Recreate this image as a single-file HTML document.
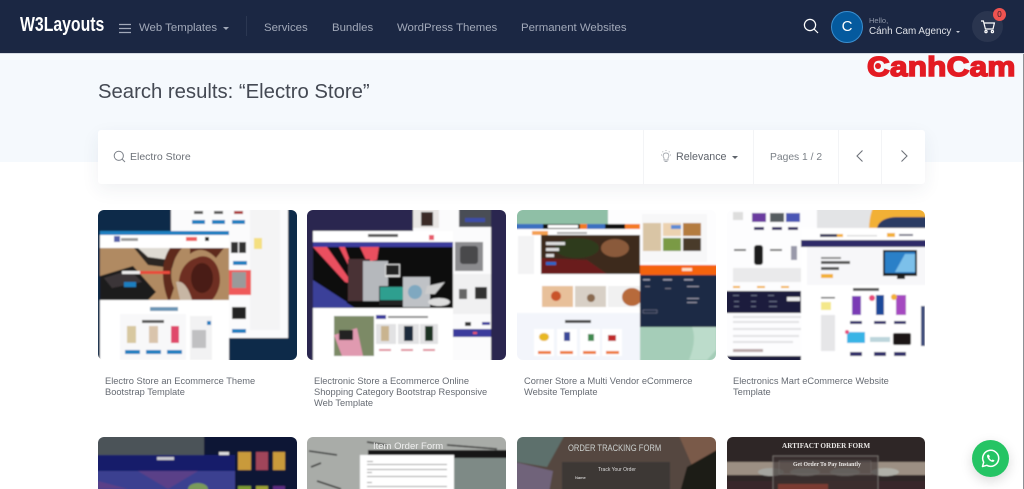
<!DOCTYPE html>
<html><head><meta charset="utf-8">
<style>
*{box-sizing:border-box}
html,body{margin:0;padding:0;width:1024px;height:489px;overflow:hidden;background:#fff;font-family:"Liberation Sans","Noto Sans CJK SC",sans-serif}
body{position:relative}
.a{position:absolute;white-space:nowrap}
#hd{position:absolute;left:0;top:0;width:1024px;height:53px;background:#1b2743}
.nav{position:absolute;top:21px;font-size:11.4px;line-height:14px;color:#a2a9b9;white-space:nowrap}
.card{position:absolute;width:199px;border-radius:6px;overflow:hidden}
.card svg{display:block;position:absolute;left:0;top:0}
.t{position:absolute;top:375.500px;font-size:9.300px;line-height:11.200px;color:#666b73;width:195px}
.caret{position:absolute;width:0;height:0;border-left:3px solid transparent;border-right:3px solid transparent;border-top:3px solid currentColor}
</style></head><body>
<div id="hd"></div>
<div class="a" style="left:20px;top:13px;font-size:20px;line-height:24px;font-weight:700;color:#fff;transform-origin:0 0;transform:scaleX(.79)">W3Layouts</div>
<svg class="a" style="left:119px;top:23px" width="13" height="11"><path d="M0 1.500H12M0 5.500H12M0 9.500H12" stroke="#a2a9b9" stroke-width="1.200"/></svg>
<div class="nav" style="left:139px">Web Templates</div>
<div class="caret" style="left:223px;top:27px;color:#a2a9b9"></div>
<div class="a" style="left:246px;top:16px;width:1px;height:20px;background:#2b3752"></div>
<div class="nav" style="left:264px">Services</div>
<div class="nav" style="left:332px">Bundles</div>
<div class="nav" style="left:397px">WordPress Themes</div>
<div class="nav" style="left:521px">Permanent Websites</div>
<svg class="a" style="left:803px;top:18px" width="16" height="16" fill="none" stroke="#fff" stroke-width="1.200"><circle cx="7" cy="7" r="5.600"/><path d="M11 11L15 15"/></svg>
<div class="a" style="left:831px;top:11px;width:32px;height:32px;border-radius:50%;background:#055a9e;border:1px solid #3b8fd0;color:#fff;font-size:15px;line-height:30px;text-align:center">C</div>
<div class="a" style="left:869px;top:16px;font-size:7.500px;line-height:10px;color:#8f97a9">Hello,</div>
<div class="a" style="left:869px;top:25.500px;font-size:9.900px;line-height:12px;color:#dfe2e8">Cánh Cam Agency</div>
<div class="caret" style="left:956px;top:31px;color:#c8ccd5;border-left-width:2.500px;border-right-width:2.500px;border-top-width:2.500px"></div>
<div class="a" style="left:972px;top:11px;width:31px;height:31px;border-radius:50%;background:#2a354f"></div>
<svg class="a" style="left:980px;top:19px" width="16" height="15" fill="none" stroke="#fff" stroke-width="1.200"><path d="M1 2H3.400L5.400 10H13L14.400 4H4"/><circle cx="6" cy="12.600" r="1.100"/><circle cx="12.400" cy="12.600" r="1.100"/></svg>
<div class="a" style="left:993px;top:8px;width:13px;height:13px;border-radius:50%;background:#ef5350;color:#2a1d2a;font-size:8px;line-height:13px;text-align:center">0</div>

<div class="a" style="left:0;top:53px;width:1024px;height:1px;background:#d5dae3"></div>
<div class="a" style="left:0;top:54px;width:1024px;height:108px;background:#f5f9fd"></div>
<div class="a" style="left:1023px;top:54px;width:1px;height:435px;background:#8d8f94"></div>
<div class="a" style="left:867px;top:51px;font-size:28px;line-height:32px;font-weight:700;color:#e31b23;-webkit-text-stroke:1.500px #e31b23;letter-spacing:.2px;transform-origin:0 0;transform:scaleX(1.125)">CanhCam</div>
<div class="a" style="left:875px;top:63px;width:6px;height:6px;border-radius:50%;background:#e31b23"></div>
<div class="a" style="left:98px;top:80px;font-size:20.300px;line-height:25px;color:#444953">Search results: “Electro Store”</div>

<div class="a" style="left:98px;top:130px;width:827px;height:54px;background:#fff;border-radius:3px;box-shadow:0 6px 18px rgba(40,60,90,.07)"></div>
<svg class="a" style="left:113px;top:150px" width="13" height="13" fill="none" stroke="#7c8189" stroke-width="1"><circle cx="5.800" cy="5.800" r="4.600"/><path d="M9 9L12 12"/></svg>
<div class="a" style="left:130px;top:151px;font-size:10.500px;line-height:13px;color:#6c7178">Electro Store</div>
<div class="a" style="left:643px;top:130px;width:1px;height:54px;background:#f3f4f6"></div>
<div class="a" style="left:753px;top:130px;width:1px;height:54px;background:#f3f4f6"></div>
<div class="a" style="left:838px;top:130px;width:1px;height:54px;background:#f3f4f6"></div>
<div class="a" style="left:881px;top:130px;width:1px;height:54px;background:#f3f4f6"></div>
<svg class="a" style="left:660px;top:150px" width="12" height="13" fill="none" stroke="#a9adb3" stroke-width=".9"><path d="M4 8C2.500 6 3 3 6 3S9.500 6 8 8V10H4ZM4.500 11.500H7.500M1 5H2M10 5H11M2.500 1.500L3.200 2.200M9.500 1.500L8.800 2.200M6 0V1"/></svg>
<div class="a" style="left:676px;top:151px;font-size:10.700px;line-height:13px;color:#5e636b">Relevance</div>
<div class="caret" style="left:732px;top:156px;color:#5e636b"></div>
<div class="a" style="left:770px;top:151px;font-size:10.300px;line-height:13px;color:#7b8087">Pages 1 / 2</div>
<svg class="a" style="left:855px;top:149px" width="10" height="14" fill="none" stroke="#6f747b" stroke-width="1.100"><path d="M7.500 1.500L2 7L7.500 12.500"/></svg>
<svg class="a" style="left:899px;top:149px" width="10" height="14" fill="none" stroke="#6f747b" stroke-width="1.100"><path d="M2.500 1.500L8 7L2.500 12.500"/></svg>

<!-- Card 1 -->
<div class="card" style="left:98px;top:210px;height:150px">
<svg width="199" height="150" viewBox="0 0 199 150"><defs><filter id="b" x="-5%" y="-5%" width="110%" height="110%"><feGaussianBlur stdDeviation=".75"/></filter></defs>
<g filter="url(#b)">
<rect x="-6" y="-6" width="211" height="162" fill="#0a2b49"/>
<rect x="73" y="-6" width="117" height="134" fill="#fbfbfc"/>
<rect x="152" y="-6" width="30" height="126" fill="#f4f4f5"/>
<rect x="94" y="10" width="13" height="4" fill="#1b7fc0"/><rect x="114" y="10" width="13" height="4" fill="#1b7fc0"/><rect x="134" y="10" width="13" height="4" fill="#1b7fc0"/>
<rect x="96" y="1" width="9" height="3" fill="#555"/><rect x="116" y="1" width="9" height="3" fill="#555"/><rect x="136" y="1" width="9" height="3" fill="#a33"/>
<rect x="133" y="32" width="7" height="11" fill="#333"/><rect x="141" y="32" width="7" height="11" fill="#333"/><rect x="135" y="51" width="14" height="4" fill="#1b7fc0"/>
<rect x="131" y="60" width="22" height="25" fill="#ef5a5a"/><rect x="134" y="62" width="14" height="16" fill="#9a9a9a"/>
<rect x="134" y="97" width="14" height="12" fill="#222"/><rect x="134" y="119" width="14" height="4" fill="#1b7fc0"/>
<rect x="156" y="28" width="8" height="11" fill="#f4df80"/>
<rect x="2" y="21" width="129" height="135" fill="#fff"/>
<rect x="2" y="21" width="129" height="4" fill="#1b7fc0"/>
<rect x="16" y="26" width="6" height="6" fill="#5560aa"/><rect x="23" y="28" width="17" height="3" fill="#999"/>
<rect x="88" y="27" width="11" height="4" fill="#ef5a5a"/><rect x="107" y="27" width="4" height="4" fill="#222"/>
<rect x="2" y="38" width="129" height="52" fill="#b08a62"/>
<path d="M36 38H80L74 58L50 55Z" fill="#2a2523"/>
<path d="M40 38H76L72 50L50 47Z" fill="#dedad2"/>
<path d="M2 66L35 56L58 82L50 90H2Z" fill="#1e1a1a"/>
<path d="M6 68L32 60L44 72L14 78Z" fill="#3a3638"/>
<path d="M72 38L84 38C74 50 70 64 76 78L72 90H70C62 68 64 50 72 38Z" fill="#5e2a1e"/>
<path d="M84 90C76 70 84 52 98 48C110 42 122 52 122 70C122 78 118 86 114 90Z" fill="#6e2e20"/>
<ellipse cx="104" cy="68" rx="11" ry="15" fill="#4a1d16"/>
<path d="M78 72C84 70 90 76 94 90H82Z" fill="#c7b6a4"/>
<path d="M92 38H126L118 48C108 38 100 38 92 44Z" fill="#5e2a1e"/>
<rect x="24" y="61" width="18" height="3" fill="#eee"/><rect x="42" y="61" width="30" height="3" fill="#e84a3a"/>
<rect x="26" y="72" width="12" height="5" fill="#1b7fc0"/>
<rect x="52" y="97" width="28" height="4" fill="#6b95b5"/>
<rect x="22" y="104" width="66" height="46" fill="#f8f8f9"/>
<rect x="44" y="110" width="22" height="3" fill="#555"/>
<rect x="29" y="116" width="9" height="17" fill="#d8c8a0"/><rect x="51" y="116" width="9" height="17" fill="#d9c4ac"/><rect x="73" y="116" width="8" height="17" fill="#e0486a"/>
<rect x="27" y="140" width="15" height="4" fill="#1b7fc0"/><rect x="48" y="140" width="15" height="4" fill="#1b7fc0"/><rect x="69" y="140" width="15" height="4" fill="#1b7fc0"/>
<rect x="92" y="106" width="22" height="44" fill="#f2f2f3"/><rect x="109" y="111" width="4" height="4" fill="#1b7fc0"/>
<rect x="94" y="120" width="14" height="18" fill="#c0c0c2"/>
</g></svg></div>

<!-- Card 2 -->
<div class="card" style="left:307px;top:210px;height:150px">
<svg width="199" height="150" viewBox="0 0 199 150"><g filter="url(#b)">
<rect x="-6" y="-6" width="211" height="162" fill="#2b2650"/>
<rect x="106" y="-6" width="78" height="162" fill="#fbfbfc"/>
<rect x="106" y="-6" width="26" height="24" fill="#e9e6e4"/><rect x="114" y="2" width="12" height="14" fill="#3a2a28"/>
<rect x="152" y="-6" width="32" height="23" fill="#4a4d55"/><rect x="158" y="8" width="20" height="4" fill="#3c4da8"/>
<rect x="148" y="32" width="28" height="29" fill="#8b8b8e"/><rect x="153" y="36" width="18" height="18" fill="#4a4a4c" rx="3"/>
<rect x="146" y="64" width="38" height="40" fill="#f0f0f1"/><rect x="168" y="77" width="12" height="12" fill="#333"/><rect x="152" y="79" width="8" height="10" fill="#666"/>
<rect x="146" y="119" width="38" height="8" fill="#3a3a9c"/><rect x="166" y="122" width="4" height="2" fill="#e85a6a"/>
<rect x="175" y="112" width="8" height="3" fill="#3a3a9c"/><rect x="158" y="112" width="6" height="4" fill="#333"/>
<rect x="6" y="21" width="140" height="135" fill="#fff"/>
<rect x="6" y="32" width="140" height="5" fill="#3a3a9c"/>
<rect x="61" y="24" width="30" height="3" fill="#555"/>
<rect x="122" y="25" width="5" height="5" fill="#e85a6a"/>
<rect x="6" y="37" width="140" height="61" fill="#0a0a0d"/>
<path d="M6 70L40 92L36 98H6Z" fill="#3a3f99"/><path d="M6 72L48 98H6Z" fill="#3a3f99"/>
<path d="M6 37H38L52 76L38 72Z" fill="#ea4f5f"/><path d="M20 37H32L55 82L46 74Z" fill="#0a0a0d"/>
<path d="M53 37H72L70 50L60 52Z" fill="#ea4f5f"/>
<rect x="41" y="49" width="22" height="42" fill="#4a3136"/>
<rect x="56" y="51" width="25" height="40" fill="#b5b8bc"/>
<rect x="78" y="54" width="15" height="13" fill="#ddd"/><rect x="79" y="55" width="13" height="10" fill="#222"/>
<rect x="72" y="76" width="27" height="19" fill="#222"/><rect x="73" y="77" width="25" height="13" fill="#2d9f8f"/>
<rect x="96" y="67" width="27" height="30" fill="#bfc2c6"/><circle cx="108" cy="82" r="7" fill="#7fa8c0"/>
<path d="M120 76L138 72L128 84L118 84Z" fill="#ccc"/><ellipse cx="132" cy="92" rx="11" ry="4" fill="#ddd"/>
<rect x="27" y="106" width="40" height="40" fill="#7c8a66"/><path d="M27 125L50 118L56 146H35Z" fill="#e09ab0"/><rect x="32" y="120" width="14" height="10" fill="#222"/>
<rect x="69" y="105" width="10" height="4" fill="#3a3a9c"/><rect x="81" y="106" width="40" height="2" fill="#888"/>
<rect x="69" y="114" width="20" height="20" fill="#e2e2e3"/><rect x="74" y="116" width="8" height="15" fill="#c9b48f"/>
<rect x="91" y="114" width="21" height="20" fill="#e2e2e3"/><rect x="97" y="116" width="9" height="15" fill="#1a2a3a"/>
<rect x="113" y="114" width="18" height="20" fill="#e2e2e3"/><rect x="118" y="116" width="8" height="15" fill="#1f3020"/>
<rect x="72" y="139" width="12" height="2" fill="#e08a9a"/><rect x="94" y="139" width="12" height="2" fill="#e08a9a"/><rect x="116" y="139" width="12" height="2" fill="#e08a9a"/>
</g></svg></div>

<!-- Card 3 -->
<div class="card" style="left:517px;top:210px;height:150px">
<svg width="199" height="150" viewBox="0 0 199 150"><g filter="url(#b)">
<rect x="-6" y="-6" width="211" height="162" fill="#fdfdfe"/>
<rect x="-6" y="-6" width="97" height="26" fill="#8fbfa6"/>
<rect x="123" y="117" width="82" height="39" fill="#a5cdb8"/>
<path d="M175 117H199V140L190 150H172Q180 130 175 117Z" fill="#bcdccb"/>
<rect x="125" y="4" width="65" height="48" fill="#f7f7f8"/>
<rect x="126" y="13" width="18" height="28" fill="#d9c5a5"/><rect x="146" y="13" width="18" height="13" fill="#ecd2b0"/><rect x="166" y="13" width="18" height="13" fill="#b47b3f"/>
<rect x="146" y="28" width="18" height="13" fill="#7a9a45"/><rect x="166" y="28" width="18" height="13" fill="#4a3a2a"/>
<rect x="154" y="15" width="10" height="4" fill="#5d8bd5"/>
<rect x="-6" y="14" width="129" height="142" fill="#fff"/>
<rect x="-6" y="14" width="32" height="5" fill="#3a70c0"/><rect x="26" y="14" width="37" height="5" fill="#111"/><rect x="31" y="15" width="30" height="3" fill="#fff"/><rect x="63" y="14" width="7" height="5" fill="#f47a20"/><rect x="70" y="14" width="18" height="5" fill="#3a70c0"/><rect x="88" y="14" width="22" height="5" fill="#111"/><rect x="108" y="14" width="15" height="5" fill="#f47a20"/>
<rect x="15" y="21" width="16" height="4" fill="#f4a050"/><rect x="40" y="22" width="30" height="2" fill="#aaa"/>
<rect x="24" y="25" width="99" height="39" fill="#3c2a1c"/>
<path d="M24 48L70 50L90 64H24Z" fill="#6a1f1f"/><ellipse cx="98" cy="38" rx="14" ry="9" fill="#8a5a3a"/><ellipse cx="60" cy="38" rx="22" ry="10" fill="#2e3a1c"/>
<rect x="29" y="32" width="19" height="3" fill="#ddd"/><rect x="29" y="38" width="13" height="3" fill="#ddd"/><rect x="29" y="44" width="8" height="3" fill="#ddd"/><rect x="29" y="52" width="10" height="3" fill="#2a68c8"/>
<rect x="1" y="26" width="16" height="38" fill="#f3f3f4"/>
<rect x="25" y="76" width="31" height="21" fill="#e8c09a"/><circle cx="39" cy="86" r="5" fill="#c9522a"/>
<rect x="58" y="76" width="31" height="21" fill="#d8d0c6"/><circle cx="74" cy="88" r="4" fill="#8a6a50"/>
<rect x="91" y="76" width="32" height="21" fill="#f1f1f1"/><ellipse cx="115" cy="87" rx="10" ry="9" fill="#b76a3a"/>
<rect x="-6" y="103" width="129" height="53" fill="#f3f5fb"/>
<rect x="48" y="110" width="26" height="3" fill="#444"/>
<rect x="17" y="119" width="20" height="27" fill="#fff"/><rect x="40" y="119" width="20" height="27" fill="#fff"/><rect x="63" y="119" width="20" height="27" fill="#fff"/><rect x="85" y="119" width="20" height="27" fill="#fff"/>
<ellipse cx="27" cy="127" rx="5" ry="4" fill="#e8b820"/><rect x="47" y="122" width="6" height="9" fill="#3a4a9a"/><rect x="71" y="124" width="6" height="7" fill="#3f8a50"/><rect x="91" y="125" width="8" height="6" fill="#c02a2a"/>
<rect x="21" y="141" width="13" height="3" fill="#ee7a3a"/><rect x="43" y="141" width="13" height="3" fill="#ee7a3a"/><rect x="66" y="141" width="13" height="3" fill="#ee7a3a"/><rect x="89" y="141" width="13" height="3" fill="#ee7a3a"/>
<rect x="123" y="55" width="82" height="62" fill="#1d2a45"/>
<rect x="123" y="55" width="82" height="10" fill="#f4630f"/>
<rect x="165" y="58" width="10" height="3" fill="#fde0c8"/>
<rect x="126" y="69" width="7" height="1.500" fill="#99a"/><rect x="146" y="69" width="9" height="1.500" fill="#99a"/><rect x="167" y="69" width="9" height="1.500" fill="#99a"/>
<rect x="128" y="76" width="5" height="1" fill="#778"/><rect x="148" y="78" width="6" height="1" fill="#778"/><rect x="170" y="76" width="12" height="1" fill="#99a"/><rect x="170" y="88" width="12" height="1" fill="#99a"/><rect x="170" y="92" width="10" height="1" fill="#99a"/>
<rect x="126" y="100" width="14" height="3" fill="none" stroke="#889" stroke-width=".5"/>
</g></svg></div>

<!-- Card 4 -->
<div class="card" style="left:727px;top:210px;height:150px;width:198px">
<svg width="199" height="150" viewBox="0 0 199 150"><g filter="url(#b)">
<rect x="-6" y="-6" width="211" height="162" fill="#fdfdfe"/>
<rect x="90" y="-6" width="115" height="26" fill="#e3e4e6"/>
<path d="M142 20C142 6 146 -6 150 -6H205V20Z" fill="#f2b035"/>
<path d="M150 20C150 10 162 7 170 7H205V20Z" fill="#2b3a63"/>
<rect x="25" y="3" width="14" height="9" fill="#6a3aa0"/><rect x="43" y="3" width="14" height="9" fill="#555b60"/><rect x="59" y="3" width="14" height="9" fill="#4a55b5"/>
<rect x="27" y="17" width="10" height="3" fill="#332a60"/><rect x="45" y="17" width="10" height="3" fill="#332a60"/><rect x="61" y="17" width="10" height="3" fill="#332a60"/>
<rect x="6" y="2" width="10" height="8" fill="#ddd"/>
<rect x="27" y="35" width="9" height="20" rx="3" fill="#1a1a1c"/><rect x="64" y="36" width="6" height="14" fill="#99a"/>
<rect x="7" y="39" width="12" height="2" fill="#777"/><rect x="43" y="39" width="12" height="2" fill="#777"/>
<rect x="6" y="58" width="68" height="14" fill="#eaeaeb"/>
<rect x="6" y="76" width="7" height="2" fill="#f2b035"/><rect x="30" y="76" width="8" height="2" fill="#f2b035"/><rect x="54" y="76" width="8" height="2" fill="#f2b035"/>
<rect x="-6" y="81" width="80" height="22" fill="#1a1f3e"/>
<rect x="60" y="87" width="13" height="4" fill="#eee"/>
<g fill="#6a6f88"><rect x="6" y="85" width="6" height="1"/><rect x="24" y="85" width="6" height="1"/><rect x="41" y="85" width="6" height="1"/><rect x="7" y="91" width="5" height="1"/><rect x="24" y="91" width="5" height="1"/><rect x="42" y="91" width="8" height="1"/><rect x="7" y="96" width="5" height="1"/><rect x="24" y="96" width="5" height="1"/><rect x="42" y="96" width="8" height="1"/></g>
<g fill="#e2e2e4"><rect x="6" y="106" width="68" height="2"/><rect x="6" y="111" width="66" height="2"/><rect x="6" y="118" width="68" height="2"/><rect x="6" y="125" width="66" height="2"/><rect x="6" y="131" width="60" height="2"/></g>
<rect x="6" y="139" width="30" height="3" fill="#b9a8a8"/>
<rect x="-6" y="146" width="81" height="10" fill="#1a1f3e"/>
<rect x="74" y="18" width="131" height="138" fill="#fff"/>
<rect x="93" y="24" width="18" height="3" fill="#3a3a5a"/><rect x="110" y="24" width="6" height="3" fill="#f2b035"/><rect x="120" y="25" width="30" height="1.500" fill="#ddd"/><rect x="160" y="23" width="8" height="4" fill="#f2b035"/><rect x="172" y="24" width="14" height="2" fill="#778"/>
<rect x="74" y="30" width="131" height="7" fill="#2d2a68"/>
<rect x="80" y="37" width="125" height="38" fill="#f7f7f9"/>
<rect x="94" y="47" width="20" height="2" fill="#888"/><rect x="94" y="51" width="29" height="3" fill="#555"/><rect x="94" y="57" width="18" height="3" fill="#555"/><rect x="94" y="64" width="12" height="4" fill="#f2b035"/>
<rect x="156" y="40" width="34" height="26" fill="#1c1c1e"/><rect x="158" y="42" width="30" height="21" fill="#2a80c8"/><path d="M168 62L178 44L188 44V62Z" fill="#7cc0ea"/><rect x="170" y="66" width="8" height="3" fill="#222"/>
<rect x="126" y="78" width="26" height="3" fill="#555"/>
<rect x="94" y="87" width="14" height="1.500" fill="#555"/><rect x="94" y="92" width="10" height="8" fill="#f4e88a"/><rect x="94" y="105" width="14" height="36" fill="#e6e6e8"/>
<rect x="125" y="86" width="9" height="19" fill="#7a3ab5"/><rect x="149" y="85" width="8" height="20" fill="#1f4a9a"/><rect x="169" y="85" width="10" height="20" fill="#a54ac0"/>
<circle cx="145" cy="88" r="3" fill="#e84a7a"/><circle cx="167" cy="87" r="3" fill="#f2b035"/>
<rect x="123" y="111" width="12" height="3" fill="#2d2a68"/><rect x="147" y="111" width="12" height="3" fill="#2d2a68"/><rect x="167" y="111" width="12" height="3" fill="#2d2a68"/>
<rect x="120" y="122" width="18" height="11" fill="#37b4e6"/><circle cx="120" cy="122" r="2" fill="#e84a7a"/><rect x="143" y="127" width="20" height="5" fill="#bcd6dc"/><rect x="166" y="123" width="18" height="12" rx="2" fill="#1c1414"/>
<rect x="123" y="142" width="12" height="4" fill="#2d2a68"/><rect x="147" y="142" width="12" height="4" fill="#2d2a68"/><rect x="167" y="142" width="12" height="4" fill="#2d2a68"/>
<rect x="194" y="96" width="4" height="40" fill="#3a4a7a"/>
</g></svg></div>

<div class="t" style="left:105px">Electro Store an Ecommerce Theme<br>Bootstrap Template</div>
<div class="t" style="left:314px">Electronic Store a Ecommerce Online<br>Shopping Category Bootstrap Responsive<br>Web Template</div>
<div class="t" style="left:524px">Corner Store a Multi Vendor eCommerce<br>Website Template</div>
<div class="t" style="left:733px">Electronics Mart eCommerce Website<br>Template</div>

<!-- Bottom row -->
<div class="card" style="left:98px;top:437px;height:60px">
<svg width="199" height="60" viewBox="0 0 199 60"><g filter="url(#b)">
<rect x="-6" y="-6" width="211" height="72" fill="#0d1436"/>
<rect x="-6" y="-6" width="112" height="24" fill="#4c5258"/>
<rect x="-6" y="18" width="143" height="16" fill="#141f6a"/>
<rect x="59" y="20" width="17" height="3" fill="#c8c8d0"/>
<rect x="121" y="15" width="10" height="3" fill="#ddd"/>
<rect x="-6" y="34" width="143" height="32" fill="#3a3f90"/>
<path d="M40 34L70 52L100 34ZM0 44L30 52H0Z" fill="#5a3f88"/>
<ellipse cx="100" cy="52" rx="10" ry="6" fill="#7a9a5a"/>
<rect x="140" y="15" width="13" height="18" fill="#c99a3a"/><rect x="158" y="15" width="12" height="18" fill="#a0455a"/><rect x="175" y="15" width="12" height="18" fill="#c99a3a"/>
<rect x="140" y="49" width="13" height="17" fill="#7a9a30"/><rect x="158" y="49" width="12" height="17" fill="#9aa030"/><rect x="175" y="49" width="12" height="17" fill="#5a2a80"/>
</g></svg></div>
<div class="card" style="left:307px;top:437px;height:60px">
<svg width="199" height="60" viewBox="0 0 199 60"><g filter="url(#b)">
<rect x="-6" y="-6" width="211" height="72" fill="#a9aca8"/>
<path d="M2 14L30 18M4 30L14 26M10 44L34 52M140 8L190 12M60 5L80 8" stroke="#333" stroke-width="1.500"/>
<rect x="61" y="13" width="144" height="8" fill="#151515"/>
<rect x="146" y="21" width="59" height="45" fill="#7e8a86"/>
<rect x="53" y="18" width="94" height="48" fill="#fff"/>
<g fill="#999"><rect x="60" y="24" width="6" height="1"/><rect x="60" y="27" width="80" height="1"/><rect x="60" y="32" width="80" height="1"/><rect x="60" y="35" width="5" height="1"/><rect x="60" y="39" width="80" height="1"/><rect x="60" y="45" width="5" height="1"/><rect x="60" y="49" width="80" height="1"/></g>
</g></svg>
<div class="a" style="left:66px;top:4px;font-size:9.500px;line-height:12px;color:#eee;font-weight:400">Item Order Form</div>
</div>
<div class="card" style="left:517px;top:437px;height:60px">
<svg width="199" height="60" viewBox="0 0 199 60"><g filter="url(#b)">
<rect x="-6" y="-6" width="211" height="72" fill="#54463f"/>
<path d="M-6 -6H50L30 30L-6 24Z" fill="#5d6f6c"/>
<path d="M-6 24L36 34L30 66H-6Z" fill="#70647a"/>
<path d="M160 -6H205V20L180 40Z" fill="#7a5a48"/>
<path d="M170 30L205 10V66H160Z" fill="#1f1a18"/>
<rect x="45" y="25" width="108" height="41" fill="#3c3836"/>
</g></svg>
<div class="a" style="left:51px;top:6px;font-size:9.500px;line-height:12px;color:#cdd2d0;transform-origin:0 0;transform:scaleX(.8)">ORDER TRACKING FORM</div>
<div class="a" style="left:81px;top:29px;font-size:5px;line-height:8px;color:#ddd">Track Your Order</div>
<div class="a" style="left:58px;top:38px;font-size:4px;line-height:6px;color:#eee">Name</div>
</div>
<div class="card" style="left:727px;top:437px;height:60px;width:198px">
<svg width="199" height="60" viewBox="0 0 199 60"><g filter="url(#b)">
<rect x="-6" y="-6" width="211" height="72" fill="#2e2826"/>
<rect x="-6" y="25" width="211" height="13" fill="#9c8f83"/>
<ellipse cx="44" cy="35" rx="13" ry="4" fill="#a5a5a0"/><ellipse cx="78" cy="35" rx="15" ry="4" fill="#b0b0a8"/><ellipse cx="118" cy="35" rx="15" ry="4" fill="#b0b0a8"/><ellipse cx="158" cy="35" rx="14" ry="4" fill="#b0b0a8"/>
<rect x="-6" y="44" width="211" height="22" fill="#38262a"/>
<rect x="46" y="19" width="105" height="47" fill="rgba(60,50,50,.65)" stroke="#88827e" stroke-width=".7"/>
<rect x="52" y="24" width="92" height="13" fill="none" stroke="#77716e" stroke-width=".5"/>
<rect x="51" y="47" width="50" height="19" fill="#7a3a30"/>
</g></svg>
<div class="a" style="left:55px;top:4px;font-size:7.200px;line-height:10px;font-family:'Liberation Serif',serif;font-weight:700;color:#e8e6e4">ARTIFACT ORDER FORM</div>
<div class="a" style="left:66px;top:24px;font-size:5.800px;line-height:9px;font-family:'Liberation Serif',serif;font-weight:700;color:#e8e6e4">Get Order To Pay Instantly</div>
</div>

<!-- WhatsApp -->
<div class="a" style="left:972px;top:440px;width:37px;height:37px;border-radius:50%;background:#25c464;box-shadow:0 4px 12px rgba(0,0,0,.15)"></div>
<svg class="a" style="left:981px;top:449px" width="19" height="19" viewBox="0 0 19 19" fill="none" stroke="#fff"><path d="M1.500 17.500L2.700 13.200A8 8 0 1 1 5.800 16.300Z" stroke-width="1.500" stroke-linejoin="round"/><path d="M6.600 5.600C5.800 6.400 5.800 7.700 6.700 9.300C7.700 11 9.800 12.900 11.600 12.900C12.800 12.900 13.500 12.200 13.400 11.400L11.700 10.500L10.800 11.300C9.800 10.900 8.600 9.700 8.200 8.700L8.900 7.800L8 5.700Z" fill="#fff" stroke="none"/></svg>
</body></html>
